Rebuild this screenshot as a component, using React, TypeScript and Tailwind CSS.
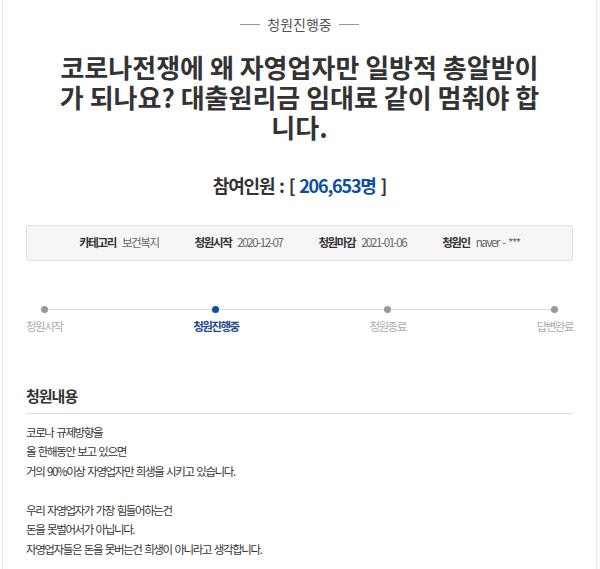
import React from 'react';

const steps = [
  { label: '청원시작', active: false },
  { label: '청원진행중', active: true },
  { label: '청원종료', active: false },
  { label: '답변완료', active: false },
];

const info = [
  { label: '카테고리', value: '보건복지' },
  { label: '청원시작', value: '2020-12-07' },
  { label: '청원마감', value: '2021-01-06' },
  { label: '청원인', value: 'naver - ***' },
];

const body = [
  '코로나 규제방향을',
  '올 한해동안 보고 있으면',
  '거의 90%이상 자영업자만 희생을 시키고 있습니다.',
  '',
  '우리 자영업자가 가장 힘들어하는건',
  '돈을 못벌어서가 아닙니다.',
  '자영업자들은 돈을 못버는건 희생이 아니라고 생각합니다.',
];

export default function App() {
  return (
    <div className="min-h-screen bg-white font-['Noto_Sans_CJK_KR','Noto_Sans',sans-serif] text-[#333]">
      <div className="ml-[2px] w-[595px] min-h-[569px] border-x border-[#e6e6e6] px-[23px]">
        {/* 상태 */}
        <div className="flex items-center justify-center gap-[7px] pt-[14px] text-[14px] text-[#555]">
          <span className="h-px w-[20px] bg-[#999]"></span>
          <span>청원진행중</span>
          <span className="h-px w-[20px] bg-[#999]"></span>
        </div>

        {/* 제목 */}
        <h1 className="mx-auto mt-[17px] w-[488px] text-center text-[26px] font-bold leading-[30px] text-[#333]">
          코로나전쟁에 왜 자영업자만 일방적 총알받이가 되나요? 대출원리금 임대료 같이 멈춰야 합니다.
        </h1>

        {/* 참여인원 */}
        <div className="mt-[30px] text-center text-[18px] font-bold tracking-[-1.2px] [word-spacing:2px] text-[#333]">
          참여인원 : [ <span className="text-[#0b4ea2]">206,653명</span> ]
        </div>

        {/* 정보 박스 */}
        <div className="mt-[26px] flex h-[36px] items-center justify-center gap-[36px] rounded-[3px] border border-[#dedede] bg-[#f6f6f6] text-[11.5px] tracking-[-1.4px] [word-spacing:2px]">
          {info.map((item) => (
            <div key={item.label} className="flex items-center gap-[6px]">
              <span className="font-bold text-[#333]">{item.label}</span>
              <span className="text-[#666]">{item.value}</span>
            </div>
          ))}
        </div>

        {/* 진행 단계 */}
        <div className="relative mt-[45px] flex justify-between">
          <div className="absolute left-[18px] right-[19px] top-[3px] h-px bg-[#dcdcdc]"></div>
          {steps.map((s) => (
            <div key={s.label} className="relative flex flex-col items-center">
              <span
                className={
                  s.active
                    ? 'h-[7px] w-[7px] rounded-full bg-[#0b4ea2]'
                    : 'h-[7px] w-[7px] rounded-full bg-[#999]'
                }
              ></span>
              <span
                className={
                  s.active
                    ? 'mt-[5px] text-[11.5px] font-bold tracking-[-1.5px] text-[#1d4a8a]'
                    : 'mt-[5px] text-[11.5px] tracking-[-1.5px] text-[#aaa]'
                }
              >
                {s.label}
              </span>
            </div>
          ))}
        </div>

        {/* 청원내용 */}
        <div className="mt-[50px] border-b border-[#dedede] pb-[5px] text-[15px] font-bold tracking-[-1px] text-[#333]">
          청원내용
        </div>
        <div className="pt-[9px] text-[11.5px] leading-[19.5px] tracking-[-1.4px] [word-spacing:1.5px] text-[#333]">
          {body.map((line, i) => (
            <p key={i} className="h-[19.5px]">
              {line}
            </p>
          ))}
        </div>
      </div>
    </div>
  );
}
